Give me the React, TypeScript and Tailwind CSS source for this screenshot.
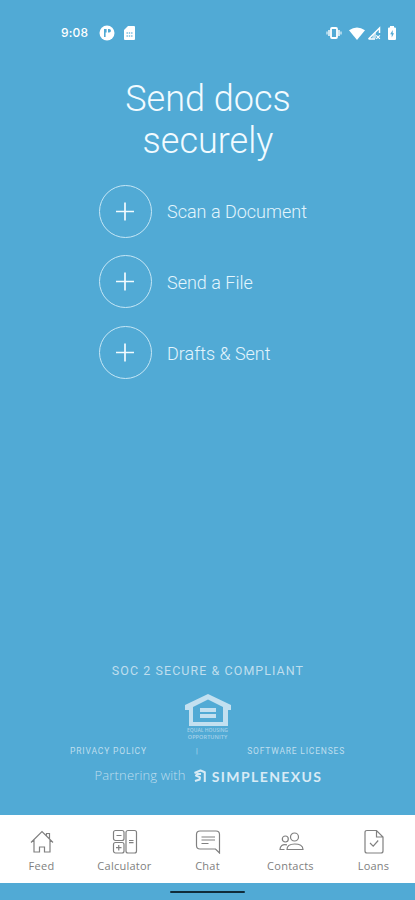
import type { ReactNode } from 'react';

const Circle = () => (
  <span className="flex h-[53px] w-[53px] items-center justify-center rounded-full border-[1.5px] border-[#c5e6f5]">
    <svg width="19" height="19" viewBox="0 0 19 19" stroke="#f2fbff" strokeWidth="1.7">
      <path d="M9 .5v18M0 9.5h18" />
    </svg>
  </span>
);

const actions = ['Scan a Document', 'Send a File', 'Drafts & Sent'];

const StatusBar = () => (
  <div className="flex h-[66px] items-center justify-between pr-[18px] pl-[61px] text-white">
    <div className="flex items-center">
      <span className="w-[38px] font-['Inter',sans-serif] text-[12px] leading-none font-medium tracking-[0.2px]">9:08</span>
      <svg width="16" height="16" viewBox="0 0 16 16">
        <circle cx="8" cy="8" r="7.5" fill="#fff" />
        <path d="M5 4h2.6v3.5H6.6V12H5zM9 4h1.2a1.7 1.7 0 0 1 0 3.5H9z" fill="#51aad5" />
      </svg>
      <svg className="ml-2" width="13" height="16" viewBox="0 0 13 16">
        <path d="M5 1h6q1 0 1 1v12q0 1-1 1H2q-1 0-1-1V5z" fill="#fff" />
        <path d="M3.5 8h1.4M5.8 8h1.4M8.1 8h1.4M3.5 11h1.4M5.8 11h1.4M8.1 11h1.4" stroke="#72bbdf" strokeWidth="1.5" />
      </svg>
    </div>
    <div className="flex items-center">
      <svg width="16" height="14" viewBox="0 0 16 14" fill="none" stroke="#fff">
        <rect x="5" y="2" width="6" height="10" rx="1" strokeWidth="1.8" />
        <path d="M3 4v6M13 4v6" strokeWidth="1.4" />
        <path d="M1 5.5v3M15 5.5v3" strokeWidth="1" />
      </svg>
      <svg className="ml-[7px]" width="16" height="13" viewBox="0 0 16 13" fill="#fff">
        <path d="M0 3.2Q8-2.4 16 3.2L8 13z" />
      </svg>
      <svg className="ml-[2px]" width="14" height="14" viewBox="0 0 14 14">
        <path d="M1.5 13L12.5 2v5M1.5 13H8" fill="none" stroke="#fff" strokeWidth="1.5" />
        <path d="M6 9l3-3v6.5H5z" fill="#fff" opacity=".6" />
        <path d="M9.3 9.3l3.6 3.6M12.9 9.3l-3.6 3.6" stroke="#fff" strokeWidth="1.2" />
      </svg>
      <svg className="ml-[6px]" width="10" height="14" viewBox="0 0 10 14">
        <path d="M3 0h4v1.5h1q1 0 1 1V13q0 1-1 1H2q-1 0-1-1V2.5q0-1 1-1h1z" fill="#fff" />
        <path d="M5.7 4L3.2 8.3h1.5v3.2L7 7.2H5.7z" fill="#51aad5" />
      </svg>
    </div>
  </div>
);

// Equal housing mark shown above the legal links
const HousingMark = () => (
  <div className="mt-[15px] flex h-[46px] flex-col items-center">
    <svg width="46" height="32" viewBox="0 0 46 32" fill="#c3e0f0">
      <path fillRule="evenodd" d="M23 0L46 11v5h-3v16H4V16H0v-5zM23 5.5L8 13v15h30V13z" />
      <path d="M15 14h16v4H15zM15 20h16v4H15z" />
    </svg>
    <span className="mt-[2px] font-['Open_Sans',sans-serif] text-[5px] leading-[5px] font-semibold whitespace-nowrap text-[#a5d1e8]">EQUAL HOUSING</span>
    <span className="mt-[2px] font-['Open_Sans',sans-serif] text-[5.5px] leading-[5px] font-semibold tracking-[0.1px] text-[#a5d1e8]">OPPORTUNITY</span>
  </div>
);

const Footer = () => (
  <div className="mt-auto flex flex-col items-center pb-[29px] text-[#bfdeee]">
    <p className="pl-px text-[12.5px] leading-4 tracking-[1.05px]">SOC 2 SECURE &amp; COMPLIANT</p>
    <HousingMark />
    <div className="mt-[5px] flex h-3 w-[275px] items-center text-[8.5px] leading-3">
      <span className="w-[126px] tracking-[0.85px]">PRIVACY POLICY</span>
      <span className="text-[7px]">|</span>
      <span className="ml-auto tracking-[0.8px] whitespace-nowrap">SOFTWARE LICENSES</span>
    </div>
    <div className="mt-[9px] flex h-5 items-center pl-[2px]">
      <span className="font-['Open_Sans',sans-serif] text-[13px] font-light tracking-[0.15px]">Partnering with</span>
      <svg className="ml-[7px]" width="13" height="14" viewBox="0 0 13 14" fill="none" stroke="#d8ebf5" strokeWidth="2">
        <path d="M1.500 4l6-2.500 4.300 1.700V13M8 5L4.800 4.800 3 6.500l4 1.800-.4 2.200L2 12" strokeLinejoin="round" />
      </svg>
      <span className="ml-[6px] font-['Lato',sans-serif] text-[14px] font-bold tracking-[1.4px] text-[#d8ebf5]">SIMPLENEXUS</span>
    </div>
  </div>
);

const NavItem = ({ label, children }: { label: string; children: ReactNode }) => (
  <div className="flex flex-1 flex-col items-center pt-[13px] text-[#808080]">
    <svg width="26" height="26" viewBox="0 0 26 26" fill="none" stroke="currentColor" strokeWidth="1.2">
      {children}
    </svg>
    <span className="mt-1 font-['Open_Sans',sans-serif] text-[11px] leading-[15px] tracking-[0.25px]">{label}</span>
  </div>
);

const BottomNav = () => (
  <nav className="flex h-[68px] bg-white">
    <NavItem label="Feed">
      <path d="M2 14.5l11-11 11 11M5 12v12h5.5v-5h5v5H21V12M17.5 7.5v-2h3v5" />
    </NavItem>
    <NavItem label="Calculator">
      <rect x="1.5" y="2.5" width="10.5" height="10" rx="2" />
      <rect x="1.5" y="14.5" width="10.5" height="10.5" rx="2" />
      <rect x="14" y="2.5" width="10.5" height="22.5" rx="2" />
      <path d="M4.5 7.5h5M4 19.7h5.5M6.75 17v5.5M17 12.5h4.5M17 14.7h4.5" />
    </NavItem>
    <NavItem label="Chat">
      <path d="M5 3h16q3.5 0 3.5 3.5V25l-4-4H5q-3.5 0-3.5-3.5v-11Q1.5 3 5 3zM6.5 9H20M6.5 12H20M6.5 15.5h7" />
    </NavItem>
    <NavItem label="Contacts">
      <circle cx="16.5" cy="9" r="4" />
      <circle cx="7.3" cy="11" r="3" />
      <path d="M9 21.5c0-3.8 3-5.5 7.7-5.5s8.3 1.7 8.3 5.5zM9 16.8c-4.500-1-7 1-7 4.700h4.500" />
    </NavItem>
    <NavItem label="Loans">
      <path d="M15.5 2.5H6q-2 0-2 2V23q0 2 2 2h14q2 0 2-2V9zM15.5 2.5V9H22M9 15l3.200 3.200 5-5.700" />
    </NavItem>
  </nav>
);

export default function App() {
  return (
    <div className="flex h-[900px] w-[415px] flex-col bg-[#51aad5] font-['Roboto',sans-serif]">
      <StatusBar />
      <h1 className="mt-3 pl-px text-center text-[36px] leading-[42px] font-light text-[#f2fbff]">
        Send docs
        <br />
        securely
      </h1>
      <div className="mt-[22.7px] ml-[98.5px] flex flex-col gap-[17.7px]">
        {actions.map((label) => (
          <div key={label} className="flex items-center gap-[15.5px] text-[18px] font-light text-[#e3f5fd]">
            <Circle />
            <span className="pt-px">{label}</span>
          </div>
        ))}
      </div>
      <Footer />
      <BottomNav />
      <div className="flex h-[17px] items-center justify-center">
        <div className="h-[2px] w-[75px] rounded-full bg-[#102c3b]" />
      </div>
    </div>
  );
}
